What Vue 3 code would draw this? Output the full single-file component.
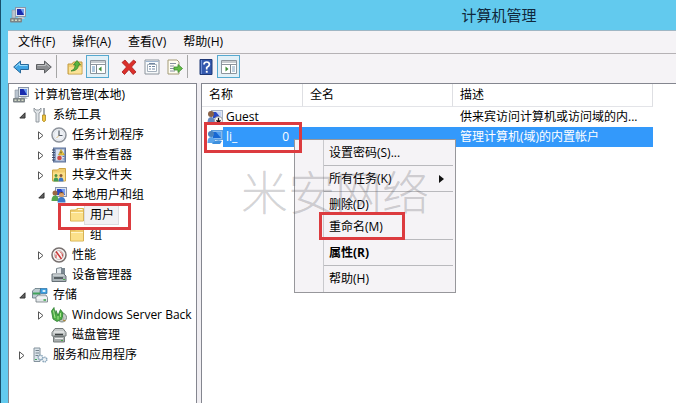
<script setup>
import { ref } from 'vue'

const menus = ['文件(F)', '操作(A)', '查看(V)', '帮助(H)']

const tools = [
  { icon: 'back', label: '后退' },
  { icon: 'forward', label: '前进' },
  { line: true },
  { icon: 'up', label: '上一级' },
  { icon: 'pane-left', label: '显示/隐藏控制台树', on: true },
  { gap: true },
  { icon: 'delete', label: '删除' },
  { icon: 'props', label: '属性' },
  { icon: 'export', label: '导出列表' },
  { line: true },
  { icon: 'help', label: '帮助' },
  { icon: 'pane-right', label: '显示/隐藏操作窗格', on: true },
]

const tree = [
  { level: 0, icon: 'computer', text: '计算机管理(本地)' },
  { level: 1, icon: 'tools', text: '系统工具', state: 'open' },
  { level: 2, icon: 'clock', text: '任务计划程序', state: 'closed' },
  { level: 2, icon: 'events', text: '事件查看器', state: 'closed' },
  { level: 2, icon: 'shared', text: '共享文件夹', state: 'closed' },
  { level: 2, icon: 'users', text: '本地用户和组', state: 'open' },
  { level: 3, icon: 'folder', text: '用户', selected: true },
  { level: 3, icon: 'folder', text: '组' },
  { level: 2, icon: 'perf', text: '性能', state: 'closed' },
  { level: 2, icon: 'device', text: '设备管理器' },
  { level: 1, icon: 'storage', text: '存储', state: 'open' },
  { level: 2, icon: 'backup', text: 'Windows Server Back', state: 'closed' },
  { level: 2, icon: 'disk', text: '磁盘管理' },
  { level: 1, icon: 'services', text: '服务和应用程序', state: 'closed' },
]

const rows = [
  { icon: 'user-off', name: 'Guest', tail: '', desc: '供来宾访问计算机或访问域的内...' },
  { icon: 'user-sel', name: 'li_', tail: '0', desc: '管理计算机(域)的内置帐户' },
]
const selectedRow = ref(1)

const context = [
  [{ text: '设置密码(S)...' }],
  [{ text: '所有任务(K)', sub: true }],
  [{ text: '删除(D)' }, { text: '重命名(M)' }],
  [{ text: '属性(R)', bold: true }],
  [{ text: '帮助(H)' }],
]
</script>

<template>
  <div class="window">
    <svg class="defs" width="0" height="0" aria-hidden="true">
      <symbol id="computer" viewBox="0 0 16 16">
        <rect x="5.500" y=".5" width="10" height="9" fill="#dfe6ee" stroke="#8a96a8" />
        <path d="M7 2h7v6H7z" fill="#1a2cae" />
        <path d="M10.500 2H14v6z" fill="#6f9cf0" />
        <path d="M2 3h3.500v8H2z" fill="#b9c4cf" stroke="#8b969f" stroke-width=".6" />
        <path d="M8 10h5l2 2H7z" fill="#c1c9d2" />
        <rect x="0" y="11" width="12" height="4.500" rx="1" fill="#7c8487" />
        <path d="M1.500 12.500h2v1.500h-2zM5 12.500h2v1.500H5zM8.500 12.500h2v1.500h-2z" fill="#d3d9c4" />
      </symbol>
      <symbol id="tools" viewBox="0 0 16 16">
        <path d="M2 1v3.500L4 6v9h3V6l2-1.500V1L7 3H4z" fill="#dfe3e6" stroke="#8b9298" stroke-width=".9" />
        <path d="M12 1v7" stroke="#8f959b" stroke-width="1.600" />
        <path d="M10.500 8h3v5.500q-1.500 2.500-3 0z" fill="#f0c541" stroke="#a98622" stroke-width=".8" />
      </symbol>
      <symbol id="clock" viewBox="0 0 16 16">
        <circle cx="8" cy="8" r="7" fill="#f7f8fa" stroke="#8d939b" stroke-width="1.500" />
        <circle cx="8" cy="8" r="5.300" fill="#eef1f5" stroke="#cdd2da" stroke-width=".6" />
        <path d="M8 3.500v5h3.500" fill="none" stroke="#525a66" stroke-width="1.200" />
        <path d="M8 8.500 5.500 11" stroke="#d0a040" stroke-width=".7" />
      </symbol>
      <symbol id="events" viewBox="0 0 16 16">
        <rect x="2.500" y="1" width="12" height="14" fill="#8ba0c4" stroke="#5f7299" />
        <path d="M5 2.500h8v11H5z" fill="#dce4f2" />
        <path d="M1 3h3M1 5.500h3M1 8h3M1 10.500h3M1 13h3" stroke="#3f4c66" />
        <path d="M10 2.500 13.500 8h-6z" fill="#f5cf3d" stroke="#a98a20" stroke-width=".6" />
        <path d="M10 4.500v2" stroke="#333" />
        <circle cx="8.500" cy="11" r="2.300" fill="#cf4b46" />
        <path d="M11.500 9.500h2M11.500 12h2" stroke="#5a76b5" />
      </symbol>
      <symbol id="folder" viewBox="0 0 16 16">
        <path d="M1.500 14V3h5l1.500-1.500h6.500V14z" fill="#f0cd6c" stroke="#d6b255" />
        <path d="M9 2.500h4.500" stroke="#fffbe8" />
        <path d="M2 5.500h12V13.500H2z" fill="#fbe08a" />
        <path d="M2 5.500h12" stroke="#fff5c8" />
      </symbol>
      <symbol id="shared" viewBox="0 0 16 16">
        <path d="M1.500 14V3h5L8 1.500h6.500V14z" fill="#f0cd6c" stroke="#cda546" />
        <path d="M2 5.500h12V13.500H2z" fill="#fbe08a" />
        <circle cx="5" cy="8.500" r="1.500" fill="#52913f" />
        <path d="M2.500 14.500q0-4 2.500-4t2.500 4z" fill="#3f9b55" />
        <circle cx="10" cy="8.500" r="1.500" fill="#8c5a34" />
        <path d="M7.500 14.500q0-4 2.500-4t2.500 4z" fill="#3c75c6" />
      </symbol>
      <symbol id="users" viewBox="0 0 16 16">
        <rect x="4.500" y=".5" width="11" height="9" fill="#dfe6ee" stroke="#8794aa" />
        <path d="M6 2h8v6H6z" fill="#2b49c4" />
        <path d="M10 2h4v6z" fill="#789ff0" />
        <circle cx="4" cy="6" r="2.500" fill="#9b6841" />
        <path d="M.5 14q0-5.500 3.500-5.500T8 14z" fill="#55a54c" />
        <circle cx="10.500" cy="7.500" r="2.500" fill="#d9a067" />
        <path d="M8 6.500q2.500-3 5 0-2.500-1-5 0z" fill="#5a3a22" />
        <path d="M6.500 15.500q0-5.500 4-5.500t4 5.500z" fill="#3c78c8" />
      </symbol>
      <symbol id="perf" viewBox="0 0 16 16">
        <circle cx="8" cy="8" r="7" fill="#f8f4f3" stroke="#77706f" stroke-width="1.500" />
        <circle cx="8" cy="8" r="4.500" fill="none" stroke="#b5adab" stroke-width=".8" />
        <path d="M5 4.500 10.500 12" stroke="#c93434" stroke-width="1.500" />
        <path d="M9 4.500q3 2 2.500 5M5 7.500v3.500" fill="none" stroke="#c93434" />
      </symbol>
      <symbol id="device" viewBox="0 0 16 16">
        <path d="M5.500 6V1.500l5-1V6" fill="#e5ebef" stroke="#7a858d" />
        <path d="M10 1h4v7h-4z" fill="#7b8790" />
        <path d="M1 7h12l2 2v5.500H1z" fill="#a9b2b6" stroke="#667076" />
        <path d="M2 8h11" stroke="#e9edef" />
        <path d="M3 11h9" stroke="#3d4448" stroke-width="1.500" />
        <path d="M12 12.500h2" stroke="#4cae4c" />
      </symbol>
      <symbol id="storage" viewBox="0 0 16 16">
        <path d="M.5 4 3 1.500h6L8 4v7H.5z" fill="#bccbd1" stroke="#60757d" stroke-width=".8" />
        <path d="M1 5.500h7v2H1z" fill="#3fa35a" />
        <path d="M8.500 1.500h6.500v5H8.500z" fill="#3b9fe0" stroke="#2d6fa0" stroke-width=".7" />
        <ellipse cx="12" cy="4" rx="1.700" ry="1" fill="#e9f6ff" />
        <path d="M4 10.500 6 8h8l1.500 2.500v4.500H4z" fill="#e2e7e9" stroke="#6e797f" stroke-width=".8" />
        <path d="M4.500 11h10.500" stroke="#fff" />
        <path d="M11.500 13h2.500" stroke="#34a444" stroke-width="1.500" />
      </symbol>
      <symbol id="backup" viewBox="0 0 16 16">
        <circle cx="11" cy="10.500" r="4.500" fill="#c7cdca" stroke="#7d8882" />
        <circle cx="11.500" cy="11" r="1.300" fill="#fff" stroke="#7d8882" stroke-width=".6" />
        <path d="M.5 4 3 .5l1 7 1-4 2 5 2.500-6L12 6l-1 6-2 1-3 1.500L2 12z" fill="#4eae46" stroke="#2e7d32" stroke-width=".8" />
        <path d="M2.500 3.500 4 11M7 9v3.500M9.500 6v4" stroke="#a9e68f" />
        <path d="M12 13 14.500 14" stroke="#b08030" stroke-width="1.300" />
      </symbol>
      <symbol id="disk" viewBox="0 0 16 16">
        <path d="M1 5.500 4 1.500h8l3 4V9H1z" fill="#c5c9c9" stroke="#757b7b" />
        <path d="M3 5h10" stroke="#f4f4f4" />
        <path d="M4 7.500h8" stroke="#3d4242" stroke-width="1.500" />
        <path d="M2.500 9.500h11V15h-11z" fill="#a7acac" stroke="#757b7b" />
        <path d="M4 11.500h8" stroke="#eee" />
        <path d="M10 13.500h2" stroke="#4a4" />
      </symbol>
      <symbol id="services" viewBox="0 0 16 16">
        <path d="M2 1h6v13.500H2z" fill="#dbe4ea" stroke="#84929c" />
        <path d="M3.500 3.500h3.500M3.500 6h3.500M3.500 8.500h3" stroke="#74838e" />
        <path d="M3 12.500h2" stroke="#3fa35a" />
        <circle cx="8.500" cy="10.500" r="2.300" fill="#edf3f7" stroke="#8aa6bb" stroke-width="1.500" stroke-dasharray="1.500 .6" />
        <circle cx="12.500" cy="12.500" r="2.300" fill="#edf3f7" stroke="#8aa6bb" stroke-width="1.500" stroke-dasharray="1.300 .6" />
      </symbol>
      <symbol id="user-off" viewBox="0 0 16 16">
        <rect x="4.500" y="1.500" width="11" height="9" fill="#dfe6ee" stroke="#a5b1c6" />
        <path d="M6 3h8v6H6z" fill="#2b49c4" />
        <path d="M9 3h5v6z" fill="#c3d3f7" />
        <circle cx="4" cy="5" r="3" fill="#8b6248" />
        <path d="M.5 14q0-6 3.500-6t5 6z" fill="#6788bd" />
        <circle cx="11.500" cy="11.500" r="4" fill="#fff" stroke="#8b8b8b" stroke-width=".8" />
        <path d="M11.500 8.800v4M9.500 11.200l2 2.300 2-2.300" fill="none" stroke="#111" stroke-width="1.300" />
      </symbol>
      <symbol id="user-sel" viewBox="0 0 16 16">
        <rect x="4.500" y="1.500" width="11" height="9" fill="#85b9ee" stroke="#5c9ddd" />
        <path d="M6 3h8v6H6z" fill="#1768d3" />
        <path d="M9 3h5v6z" fill="#53a1f1" />
        <circle cx="4" cy="5" r="3" fill="#4a83bd" />
        <path d="M.5 14q0-6 3.500-6t5 6z" fill="#5ba6ec" />
        <path d="M6 13.500q4-3.500 9-1.500l-2 3H5z" fill="#3d8fdd" />
      </symbol>
      <symbol id="back" viewBox="0 0 16 16">
        <path d="M.7 8 7.500 2v3.500h8v5h-8V14z" fill="#3fa5e4" stroke="#28689a" />
        <path d="M2.500 8 6.500 4.500v2h8" fill="none" stroke="#9bdcfa" />
      </symbol>
      <symbol id="forward" viewBox="0 0 16 16">
        <path d="M15.300 8 8.500 2v3.500h-8v5h8V14z" fill="#8b8d90" stroke="#5c5e61" />
        <path d="M1.500 6.500h8v-2L13.500 8" fill="none" stroke="#bcbec0" />
      </symbol>
      <symbol id="up" viewBox="0 0 16 16">
        <path d="M1 15V5h4l1.500-2H15v12z" fill="#f1cf73" stroke="#c29b43" />
        <path d="M2 8h12.500v6.500H2z" fill="#fbe298" />
        <path d="M4 12q4-1 4.500-6H6.500L10 1.500 13.500 6h-2Q11 12 4 12z" fill="#59b53f" stroke="#35812a" stroke-width=".8" />
      </symbol>
      <symbol id="pane-left" viewBox="0 0 16 16">
        <path d="M.5 1.500h15v13H.5z" fill="#fff" stroke="#8d959d" />
        <path d="M1 3h14M1 5.500h14" stroke="#8e969e" />
        <path d="M6.500 6v8" stroke="#7d858d" />
        <path d="M2 8h3M2 10h3M2 12h3" stroke="#5d8fbd" />
        <path d="M11.500 7.500v5L8.500 10z" fill="#3c8c36" />
      </symbol>
      <symbol id="pane-right" viewBox="0 0 16 16">
        <path d="M.5 1.500h15v13H.5z" fill="#fff" stroke="#8d959d" />
        <path d="M1 3h14M1 5.500h14" stroke="#8e969e" />
        <path d="M9.500 6v8" stroke="#7d858d" />
        <path d="M11 8h3M11 10h3M11 12h3" stroke="#7fa0bd" />
        <path d="M4.500 7.500v5l3-2.500z" fill="#3c8c36" />
      </symbol>
      <symbol id="delete" viewBox="0 0 16 16">
        <path d="M1 3.500 4 1l4 4.500L12.500 1 15 3l-4.500 5 4.500 5-3 2.500-4-5-4.500 5L1 13l4.500-5z" fill="#dc2f2b" stroke="#a61d1d" stroke-width=".8" />
      </symbol>
      <symbol id="props" viewBox="0 0 16 16">
        <path d="M1 1h14v14H1z" fill="#f7f9fb" stroke="#8c949d" />
        <path d="M1.500 2.500h13" stroke="#9fb4ce" />
        <path d="M3.500 5.500h9v7h-9z" fill="#fff" stroke="#a5b0bc" />
        <path d="M5 4.500h6M5 7.500h2M8 7.500h3M5 10h2M8 10h3" stroke="#7186a2" />
      </symbol>
      <symbol id="export" viewBox="0 0 16 16">
        <path d="M1 1h9l2 2v12H1z" fill="#fffdf2" stroke="#a39a77" />
        <path d="M3 4.500h6M3 7h4M3 9.500h4M3 12h5" stroke="#8790a0" />
        <path d="M7 8h4V5.500L15.500 9.500 11 13.500V11H7z" fill="#63bd45" stroke="#3b8c2d" stroke-width=".8" />
      </symbol>
      <symbol id="help" viewBox="0 0 16 16">
        <path d="M2 .5h12v15H2z" fill="#3358ae" stroke="#1f3876" />
        <path d="M3.500 1v14" stroke="#6f8fd6" />
        <path d="M6 5.500Q6 3 8.700 3T11.400 5.500Q11.400 7 8.700 8.500v2" fill="none" stroke="#fff" stroke-width="1.700" />
        <path d="M7.800 11.800h1.900v1.900H7.800z" fill="#fff" />
      </symbol>
    </svg>

    <header class="titlebar">
      <svg class="icon"><use href="#computer" /></svg>
      <h1>计算机管理</h1>
    </header>

    <nav class="menubar">
      <button v-for="m in menus" :key="m" type="button">{{ m }}</button>
    </nav>

    <div class="toolbar">
      <template v-for="(t, i) in tools" :key="i">
        <span v-if="t.line || t.gap" class="divider" :class="{ line: t.line }"></span>
        <button v-else type="button" :class="{ on: t.on }" :aria-label="t.label">
          <svg class="icon"><use :href="'#' + t.icon" /></svg>
        </button>
      </template>
    </div>

    <main class="panes">
      <ul class="tree">
        <li v-for="n in tree" :key="n.text" :class="'level-' + n.level">
          <span v-if="n.level" class="twisty">
            <svg v-if="n.state === 'open'" width="7" height="7"><path d="M6 .8V6H.8z" fill="#606060" stroke="#333" /></svg>
            <svg v-else-if="n.state === 'closed'" width="6" height="9"><path d="M.5 .8v7.400L5 4.500z" fill="#fff" stroke="#555" /></svg>
          </span>
          <svg class="icon"><use :href="'#' + n.icon" /></svg>
          <span class="label" :class="{ selected: n.selected }">{{ n.text }}</span>
        </li>
      </ul>

      <section class="list">
        <table>
          <colgroup>
            <col class="c-name" /><col class="c-full" /><col class="c-desc" />
          </colgroup>
          <thead>
            <tr><th>名称</th><th>全名</th><th>描述</th></tr>
          </thead>
          <tbody>
            <tr v-for="(r, i) in rows" :key="r.name" :class="{ selected: i === selectedRow }" @click="selectedRow = i">
              <td class="name">
                <div>
                  <svg class="icon"><use :href="'#' + r.icon" /></svg>
                  <span class="account"><span>{{ r.name }}</span><span>{{ r.tail }}</span></span>
                </div>
              </td>
              <td></td>
              <td>{{ r.desc }}</td>
            </tr>
          </tbody>
        </table>
      </section>
    </main>

    <div class="context">
      <div v-for="(g, i) in context" :key="i" class="group">
        <button v-for="c in g" :key="c.text" type="button" :class="{ bold: c.bold }">
          {{ c.text }}
          <svg v-if="c.sub" width="5" height="8"><path d="M0 0v8l5-4z" fill="#111" /></svg>
        </button>
      </div>
    </div>

    <div class="watermark">米安网络</div>
    <div class="mark mark-tree"></div>
    <div class="mark mark-row"></div>
    <div class="mark mark-rename"></div>
  </div>
</template>

<style>
body {
  margin: 0;
}
</style>

<style scoped>
.window {
  position: relative;
  box-sizing: border-box;
  display: flex;
  flex-direction: column;
  min-height: 100vh;
  padding-left: 7px;
  border-left: 1px solid #17506c;
  overflow: hidden;
  background: #62caee;
  color: #000;
  font: 12px/20px "Open Sans", "Noto Sans CJK SC", sans-serif;
}
.defs {
  position: absolute;
}
button {
  margin: 0;
  padding: 0;
  border: 0;
  background: none;
  color: inherit;
  font: inherit;
}
.icon {
  flex: none;
  display: block;
  width: 16px;
  height: 16px;
}
.titlebar {
  display: flex;
  align-items: center;
  height: 30px;
  padding-left: 2px;
}
h1 {
  flex: 1;
  margin: 0;
  padding-left: 296px;
  text-align: center;
  color: #10283c;
  font-size: 15px;
  font-weight: 400;
}
.menubar {
  display: flex;
  gap: 17px;
  box-sizing: border-box;
  height: 24px;
  padding-left: 10px;
  border-top: 1px solid #9fb6c4;
  border-bottom: 1px solid #b5b2b5;
  background: #f5f3f6;
}
.toolbar {
  display: flex;
  box-sizing: border-box;
  height: 29px;
  padding: 1px 0 0 1px;
  background: #f5f3f6;
}
.toolbar button {
  display: flex;
  align-items: center;
  justify-content: center;
  box-sizing: border-box;
  width: 23px;
  height: 23px;
  border: 1px solid transparent;
}
.toolbar button.on {
  border-color: #56a9cf;
  background: #e2f0f7;
}
.divider {
  width: 8px;
  height: 23px;
}
.divider.line {
  box-sizing: border-box;
  width: 7px;
  margin-left: 1px;
  border-left: 1px solid #a6a6a6;
}
.panes {
  flex: 1;
  display: flex;
  gap: 4px;
  background: #f0eef2;
}
.tree {
  flex: none;
  box-sizing: border-box;
  width: 28.3%;
  margin: 0;
  padding: 1px 0 0 4px;
  border: 1px solid #84868f;
  border-bottom: 0;
  overflow: hidden;
  list-style: none;
  background: #fff;
}
.tree li {
  display: flex;
  align-items: center;
  height: 20px;
  white-space: nowrap;
}
.level-1 {
  padding-left: 4px;
}
.level-2 {
  padding-left: 23px;
}
.level-3 {
  padding-left: 41px;
}
.twisty {
  flex: none;
  display: flex;
  align-items: center;
  justify-content: center;
  width: 10px;
  margin-right: 5px;
}
.label {
  padding: 0 4px 0 5px;
  line-height: 18px;
}
.label.selected {
  background: #f1f1f3;
  outline: 1px solid #dcdce0;
}
.list {
  flex: 1;
  min-width: 0;
  border-top: 1px solid #84868f;
  border-left: 1px solid #84868f;
  background: #fff;
}
table {
  table-layout: fixed;
  width: 451px;
  border-collapse: separate;
  border-spacing: 0;
}
.c-name {
  width: 101px;
}
.c-full {
  width: 150px;
}
.c-desc {
  width: 200px;
}
th {
  height: 21px;
  padding: 0 7px 1px;
  border-right: 1px solid #dedfe3;
  border-bottom: 1px solid #e3e4e8;
  text-align: left;
  font-weight: 400;
}
td {
  height: 20px;
  padding: 0 7px;
  white-space: nowrap;
}
td.name {
  padding: 0 0 0 5px;
}
td.name div {
  display: flex;
  align-items: center;
}
.account {
  flex: 1;
  display: flex;
  justify-content: space-between;
  padding: 0 14px 0 3px;
}
tr.selected td,
tr.selected .account {
  background: #3399fb;
  color: #fff;
}
tr.selected td.name {
  background: #fff;
}
.context {
  position: absolute;
  top: 139px;
  left: 293px;
  box-sizing: border-box;
  width: 162px;
  padding: 2px;
  border: 1px solid #97979b;
  background: linear-gradient(to right, #f5f3f6 28px, #c9c9cd 28px, #c9c9cd 29px, #f5f3f6 29px);
}
.group + .group {
  margin-top: 1px;
  padding-top: 3px;
  background: linear-gradient(#b9b9bd, #b9b9bd) right top / calc(100% - 27px) 1px no-repeat;
}
.context button {
  display: flex;
  align-items: center;
  justify-content: space-between;
  width: 100%;
  height: 22px;
  padding: 0 9px 0 32px;
}
.context .bold {
  font-weight: 700;
}
.watermark {
  position: absolute;
  top: 162px;
  left: 240px;
  color: rgba(90, 90, 95, 0.27);
  font-size: 47px;
  font-weight: 300;
  line-height: 60px;
  white-space: nowrap;
  pointer-events: none;
}
.mark {
  position: absolute;
  box-sizing: border-box;
  border: 3px solid #dc3b3f;
  pointer-events: none;
}
.mark-tree {
  top: 203px;
  left: 57px;
  width: 73px;
  height: 27px;
}
.mark-row {
  top: 122px;
  left: 203px;
  width: 98px;
  height: 31px;
}
.mark-rename {
  top: 212px;
  left: 318px;
  width: 86px;
  height: 28px;
}
</style>
